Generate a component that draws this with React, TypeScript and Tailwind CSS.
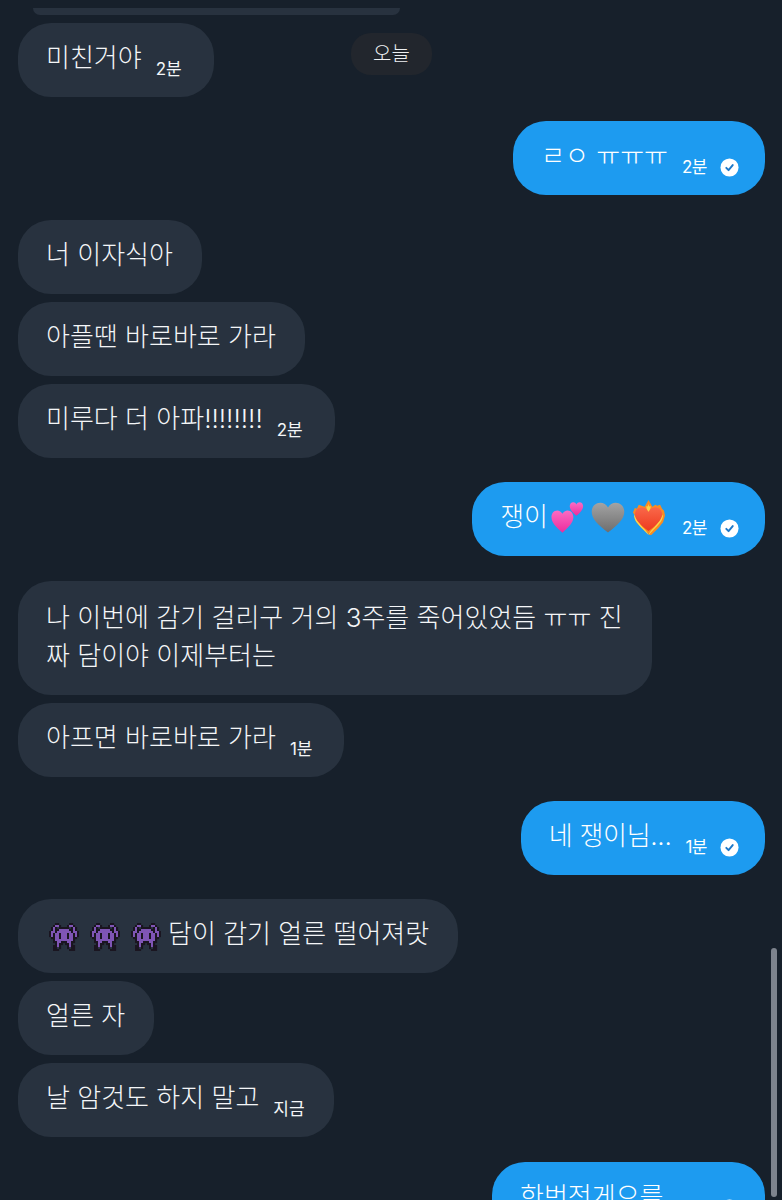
import type { ReactNode } from "react";

const font = "[font-family:'Inter','Noto_Sans_CJK_KR',sans-serif]";

function Check() {
  return (
    <svg viewBox="0 0 20 20" className="ml-[13px] size-[19px] shrink-0 translate-y-[21px]" aria-hidden="true">
      <circle cx="10" cy="10" r="9.5" fill="#fff" />
      <path d="M6.6 10.4 9 12.8 13.4 7.400" fill="none" stroke="#1d78c8" strokeWidth="2" strokeLinecap="round" strokeLinejoin="round" />
    </svg>
  );
}

function Time({ children, className = "" }: { children: string; className?: string }) {
  return <span className={`ml-[14px] shrink-0 translate-y-[20px] text-[17px] font-normal leading-[20px] ${className}`}>{children}</span>;
}

function Theirs({
  children,
  time,
  timeClassName = "mr-[3px]",
  className = "h-[74px]"
}: {
  children: ReactNode;
  time?: string;
  timeClassName?: string;
  className?: string;
}) {
  return (
    <div className={`flex w-fit items-start rounded-[33px] bg-[#28323f] pb-[20px] pl-[28px] pr-[29px] pt-[16px] text-[26px] font-light leading-[38px] text-[#f4f6f8] ${className}`}>
      <span className="whitespace-nowrap">{children}</span>
      {time ? <Time className={timeClassName}>{time}</Time> : null}
    </div>
  );
}

function Mine({ children, time }: { children: ReactNode; time: string }) {
  return (
    <div className="flex h-[74px] w-fit items-start self-end rounded-[33px] bg-[#1d9bf0] pb-[20px] pl-[28px] pr-[26px] pt-[16px] text-[26px] font-light leading-[38px] text-white">
      <span className="whitespace-nowrap">{children}</span>
      <Time className="tracking-[-0.5px]">{time}</Time>
      <Check />
    </div>
  );
}

const heartPath = "M12 21.5C5 16 .5 11.800.5 6.800.5 3.200 3.200.6 6.500.6c2.300 0 4.400 1.200 5.500 3.200C13.100 1.800 15.200.6 17.500.6c3.300 0 6 2.600 6 6.200 0 5-4.500 9.200-11.500 14.700z";

function EmojiRow() {
  return (
    <span className="mr-[3px] inline-flex -translate-y-[1px] items-center gap-[7px] align-middle">
      <svg viewBox="0 0 34 34" className="ml-[3px] w-[33px]" aria-hidden="true">
        <defs>
          <linearGradient id="pink" x1="0" y1="0" x2="0" y2="1">
            <stop offset="0" stopColor="#fb6cc4" />
            <stop offset="1" stopColor="#ec2c9c" />
          </linearGradient>
        </defs>
        <path d={heartPath} fill="url(#pink)" transform="translate(0 9) scale(.98 1.100)" />
        <path d={heartPath} fill="url(#pink)" transform="translate(19 1) scale(.6 .66)" />
      </svg>
      <svg viewBox="0 0 24 22" className="w-[34px]" aria-hidden="true">
        <defs>
          <linearGradient id="gray" x1="0" y1="0" x2="0" y2="1">
            <stop offset="0" stopColor="#a3a3a3" />
            <stop offset="1" stopColor="#6e6e6e" />
          </linearGradient>
        </defs>
        <path d={heartPath} fill="url(#gray)" />
      </svg>
      <svg viewBox="0 0 34 36" className="w-[33px]" aria-hidden="true">
        <defs>
          <linearGradient id="fire" x1="0" y1="0" x2="0" y2="1">
            <stop offset="0" stopColor="#f9684a" />
            <stop offset="1" stopColor="#ee3a1e" />
          </linearGradient>
        </defs>
        <path d="M1 13 3 8l2 1 2-4 3 1 3 1 4-7 4 7 3-2 2 1 3-1 2 4 2 2 1 5-2 7-5 6-5 5-3 3-3-3-6-5-6-7-1-6z" fill="#f98b22" />
        <path d="M2 15c0 6 4 10 9 15 2 2 4 4 6 6-1-3-3-5-6-8-3-4-6-8-9-13zM32 15c0 6-4 10-9 15-2 2-4 4-6 6 1-3 3-5 6-8 3-4 6-8 9-13z" fill="#fdd34a" />
        <path d="M17 32C9.500 26.500 3 21 3 14.500 3 10.500 6.500 7.500 10 7.500c3 0 5.500 1.500 7 4.500 1.500-3 4-4.500 7-4.500 3.500 0 7 3 7 7C31 21 24.500 26.500 17 32z" fill="url(#fire)" />
        <path d="M17 12c-1.500-2-2.500-3-2-6 .7 1 1.300 1 2-2 .7 3 1.300 3 2 2 .5 3-.5 4-2 6z" fill="#fdd34a" />
      </svg>
    </span>
  );
}

// . empty, k outline, p purple
const invaderRows = [
  "...kk.....kk...",
  "..kppk...kppk..",
  ".kpk.kkkkk.kpk.",
  ".kpkkpppppkkpk.",
  "kppkpppppppkppk",
  "kpkppkpppkppkpk",
  "kpkppkpppkppkpk",
  ".kkppkpppkppkk.",
  "..kpppppppppk..",
  "..kkppkkkppkk..",
  "...kpkk.kkpk...",
  "..kkpk...kpkk..",
  "..kk.k...k.kk..",
  "..kkk.....kkk..",
];

function Invader() {
  return (
    <svg viewBox="0 0 15 14" className="mr-[11px] inline-block w-[30px] align-[-8px]" aria-hidden="true">
      {invaderRows.map((row, y) =>
        row.split("").map((c, x) =>
          c === "." ? null : <rect key={`${x}-${y}`} x={x} y={y} width="1.05" height="1.05" fill={c === "k" ? "#1a1520" : "#7f55b5"} />
        )
      )}
    </svg>
  );
}

export default function App() {
  return (
    <div className={`relative h-[1200px] w-[782px] overflow-hidden bg-[#17202b] ${font}`}>
      <div className="flex flex-col pl-[18px] pr-[17px] pt-[8px]">
        <div className="ml-[15px] h-[7px] w-[367px] rounded-b-[20px] bg-[#28323f]" />
        <div className="mt-[8px] flex flex-col gap-[8px]">
          <Theirs time="2분">미친거야</Theirs>
        </div>
        <div className="mt-[24px] flex justify-end">
          <Mine time="2분">ㄹㅇ ㅠㅠㅠ</Mine>
        </div>
        <div className="mt-[25px] flex flex-col gap-[8px]">
          <Theirs>너 이자식아</Theirs>
          <Theirs>아플땐 바로바로 가라</Theirs>
          <Theirs time="2분">미루다 더 아파!!!!!!!!</Theirs>
        </div>
        <div className="mt-[24px] flex justify-end">
          <Mine time="2분">
            쟁이
            <EmojiRow />
          </Mine>
        </div>
        <div className="mt-[25px] flex flex-col gap-[8px]">
          <Theirs className="h-[114px] w-[634px]">
            <span className="mt-[2px] block">
              나 이번에 감기 걸리구 거의 3주를 죽어있었듬 ㅠㅠ 진<br />
              짜 담이야 이제부터는
            </span>
          </Theirs>
          <Theirs time="1분">아프면 바로바로 가라</Theirs>
        </div>
        <div className="mt-[24px] flex justify-end">
          <Mine time="1분">
            <span className="tracking-[-0.3px]">네 쟁이님...</span>
          </Mine>
        </div>
        <div className="mt-[24px] flex flex-col gap-[8px]">
          <Theirs>
            <span className="ml-[3px]" />
            <Invader />
            <Invader />
            <Invader />
            <span className="-ml-[4px]">담이 감기 얼른 떨어져랏</span>
          </Theirs>
          <Theirs>얼른 자</Theirs>
          <Theirs time="지금" timeClassName="">
            날 암것도 하지 말고
          </Theirs>
        </div>
        <div className="mt-[25px] flex justify-end">
          <div className="flex h-[74px] w-[273px] items-start rounded-[33px] bg-[#1d9bf0] pl-[28px] pr-[26px] pt-[16px] text-[26px] font-light leading-[38px] text-white">
            <span className="whitespace-nowrap">한번전게으를</span>
            <div className="ml-auto">
              <Check />
            </div>
          </div>
        </div>
      </div>

      <div className="absolute left-[351px] top-[33px] flex h-[42px] w-[81px] items-center justify-center rounded-[20px] bg-[#22262d] text-[20px] font-light text-[#eef0f2]">
        오늘
      </div>
      <div className="absolute bottom-[3px] left-[771px] top-[948px] w-[6px] rounded-full bg-[#7d838d]" />
    </div>
  );
}
